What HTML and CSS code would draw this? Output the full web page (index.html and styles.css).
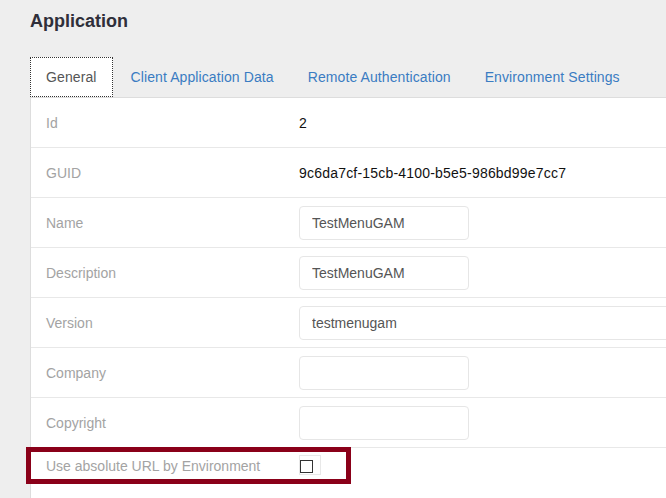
FILE: index.html
```html
<!DOCTYPE html>
<html>
<head>
<meta charset="utf-8">
<link rel="stylesheet" href="styles.css">
</head>
<body>
<div class="page">
  <h1 class="title">Application</h1>
  <ul class="tabs">
    <li class="tab active">General</li>
    <li class="tab">Client Application Data</li>
    <li class="tab">Remote Authentication</li>
    <li class="tab">Environment Settings</li>
  </ul>
  <div class="panel">
    <div class="row"><div class="label">Id</div><div class="value">2</div></div>
    <div class="row"><div class="label">GUID</div><div class="value guid">9c6da7cf-15cb-4100-b5e5-986bd99e7cc7</div></div>
    <div class="row"><div class="label">Name</div><div class="value"><input class="field" type="text" value="TestMenuGAM"></div></div>
    <div class="row"><div class="label">Description</div><div class="value"><input class="field" type="text" value="TestMenuGAM"></div></div>
    <div class="row"><div class="label">Version</div><div class="value clip"><input class="field wide" type="text" value="testmenugam"></div></div>
    <div class="row"><div class="label">Company</div><div class="value"><input class="field" type="text" value=""></div></div>
    <div class="row"><div class="label">Copyright</div><div class="value"><input class="field" type="text" value=""></div></div>
    <div class="row row-check">
      <div class="label">Use absolute URL by Environment</div>
      <div class="value"><span class="check-wrap"><input class="check" type="checkbox"></span></div>
      <div class="highlight"></div>
    </div>
  </div>
</div>
</body>
</html>
```

FILE: styles.css
```css
html, body {
  margin: 0;
  padding: 0;
  overflow: hidden;
  background: #eeeeee;
  font-family: "Liberation Sans", Arial, sans-serif;
  font-size: 14px;
}

.page {
  padding-left: 30px;
}

.title {
  margin: 0;
  padding-top: 11px;
  font-size: 18px;
  line-height: 20px;
  font-weight: bold;
  color: #2f2f3a;
}

.tabs {
  list-style: none;
  margin: 26px 0 0 0;
  padding: 0;
  display: flex;
  border-bottom: 1px solid #dddddd;
  overflow: hidden;
}

.tab {
  padding: 10px 15px;
  line-height: 18px;
  border: 1px solid transparent;
  margin-right: 2px;
  color: #3a7cc2;
  white-space: nowrap;
  letter-spacing: 0.1px;
}

.tab.active {
  border: 1px dotted #333333;
  background: #ffffff;
  color: #555555;
}

.panel {
  background: #ffffff;
  border-left: 1px solid #dddddd;
  min-height: 420px;
}

.row {
  display: grid;
  grid-template-columns: 268px minmax(0, 1fr);
  align-items: center;
  height: 50px;
  box-sizing: border-box;
  border-bottom: 1px solid #e8e8e8;
}

.label {
  padding-left: 15px;
  color: #a3a3a3;
  white-space: nowrap;
}

.value {
  color: #111111;
  white-space: nowrap;
}

.value.guid {
  letter-spacing: 0.2px;
}

.value.clip {
  overflow: hidden;
}

.field {
  box-sizing: border-box;
  width: 170px;
  height: 34px;
  padding: 0 12px;
  border: 1px solid #e6e6e6;
  border-radius: 4px;
  font-family: "Liberation Sans", Arial, sans-serif;
  font-size: 14px;
  color: #555555;
  background: #ffffff;
  outline: none;
  display: block;
}

.field.wide {
  width: 420px;
}

.row-check {
  position: relative;
  height: 36px;
  border-bottom: none;
}

.check-wrap {
  display: flex;
  align-items: flex-start;
  box-sizing: border-box;
  width: 22px;
  height: 20px;
  padding-top: 4px;
  border: 1px solid #e8e8e8;
  margin-top: -2px;
}

.check {
  appearance: none;
  -webkit-appearance: none;
  margin: 0;
  width: 13px;
  height: 13px;
  box-sizing: border-box;
  border: 1px solid #333333;
  background: #ffffff;
}

.highlight {
  position: absolute;
  left: -5px;
  top: -1px;
  width: 325px;
  height: 37px;
  box-sizing: border-box;
  border: 5px solid #8a0019;
  pointer-events: none;
}
```
